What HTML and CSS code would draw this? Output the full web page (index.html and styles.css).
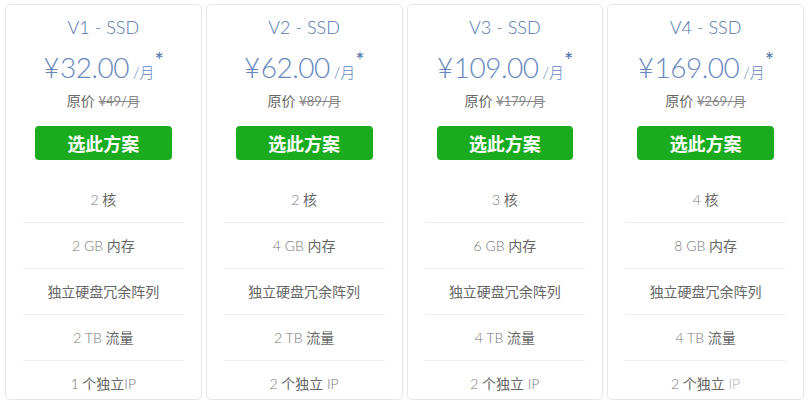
FILE: index.html
```html
<!DOCTYPE html>
<html lang="zh">
<head>
<meta charset="utf-8">
<link rel="stylesheet" href="styles.css">
</head>
<body>
<div class="plans">
  <div class="card">
    <div class="title">V1 - SSD</div>
    <div class="price"><span class="yen">¥</span>32.00<span class="unit">/月</span><span class="star">*</span></div>
    <div class="orig">原价 <s>¥49/月</s></div>
    <a class="btn">选此方案</a>
    <ul class="feats">
      <li><span class="num">2</span> 核</li>
      <li><span class="num">2 GB</span> 内存</li>
      <li>独立硬盘冗余阵列</li>
      <li><span class="num">2 TB</span> 流量</li>
      <li><span class="num">1</span> 个独立<span class="num">IP</span></li>
    </ul>
  </div>
  <div class="card">
    <div class="title">V2 - SSD</div>
    <div class="price"><span class="yen">¥</span>62.00<span class="unit">/月</span><span class="star">*</span></div>
    <div class="orig">原价 <s>¥89/月</s></div>
    <a class="btn">选此方案</a>
    <ul class="feats">
      <li><span class="num">2</span> 核</li>
      <li><span class="num">4 GB</span> 内存</li>
      <li>独立硬盘冗余阵列</li>
      <li><span class="num">2 TB</span> 流量</li>
      <li><span class="num">2</span> 个独立 <span class="num">IP</span></li>
    </ul>
  </div>
  <div class="card">
    <div class="title">V3 - SSD</div>
    <div class="price"><span class="yen">¥</span>109.00<span class="unit">/月</span><span class="star">*</span></div>
    <div class="orig">原价 <s>¥179/月</s></div>
    <a class="btn">选此方案</a>
    <ul class="feats">
      <li><span class="num">3</span> 核</li>
      <li><span class="num">6 GB</span> 内存</li>
      <li>独立硬盘冗余阵列</li>
      <li><span class="num">4 TB</span> 流量</li>
      <li><span class="num">2</span> 个独立 <span class="num">IP</span></li>
    </ul>
  </div>
  <div class="card">
    <div class="title">V4 - SSD</div>
    <div class="price"><span class="yen">¥</span>169.00<span class="unit">/月</span><span class="star">*</span></div>
    <div class="orig">原价 <s>¥269/月</s></div>
    <a class="btn">选此方案</a>
    <ul class="feats">
      <li><span class="num">4</span> 核</li>
      <li><span class="num">8 GB</span> 内存</li>
      <li>独立硬盘冗余阵列</li>
      <li><span class="num">4 TB</span> 流量</li>
      <li><span class="num">2</span> 个独立 <span class="num ip">IP</span></li>
    </ul>
  </div>
</div>
</body>
</html>
```
FILE: styles.css
```css
html, body {
  margin: 0;
  padding: 0;
  background: #fff;
  overflow: hidden;
  height: 400px;
}
body {
  font-family: Lato, "Noto Sans CJK SC", sans-serif;
  color: #555;
}
.plans {
  display: grid;
  grid-template-columns: repeat(4, 1fr);
  column-gap: 4px;
  padding: 4px 4px 0 5px;
}
.card {
  border: 1px solid #e6e6e6;
  border-radius: 5px;
  height: 396px;
  overflow: hidden;
  padding-top: 10px;
  text-align: center;
  box-sizing: border-box;
}
.title {
  font-size: 18px;
  line-height: 24px;
  color: #5477ad;
  font-weight: 300;
}
.price {
  margin-top: 8px;
  font-size: 28px;
  line-height: 40px;
  font-weight: 300;
  color: #6687bd;
  letter-spacing: -0.5px;
}
.yen {
  font-weight: 300;
  margin-right: 1px;
}
.unit {
  font-size: 15px;
  margin-left: 4px;
  letter-spacing: 0;
}
.star {
  font-size: 22px;
  font-weight: 400;
  vertical-align: 10px;
  line-height: 0;
  color: #4d72a8;
}
.orig {
  margin-top: -1px;
  font-size: 14px;
  line-height: 20px;
  color: #666;
}
.orig s {
  color: #888;
  font-size: 13px;
}
.btn {
  display: block;
  margin: 15px 29px 0 29px;
  height: 34px;
  line-height: 34px;
  background: #1bab1f;
  color: #fff;
  font-size: 18px;
  font-weight: 700;
  border-radius: 4px;
  font-family: "Noto Sans CJK SC", sans-serif;
}
.feats {
  list-style: none;
  margin: 17px 17px 0 17px;
  padding: 0;
}
.feats li {
  height: 45px;
  line-height: 46px;
  border-bottom: 1px solid #efefef;
  font-size: 14px;
  color: #666;
}
.num {
  font-weight: 300;
  color: #777;
}
.ip {
  color: #aaa;
}
```
